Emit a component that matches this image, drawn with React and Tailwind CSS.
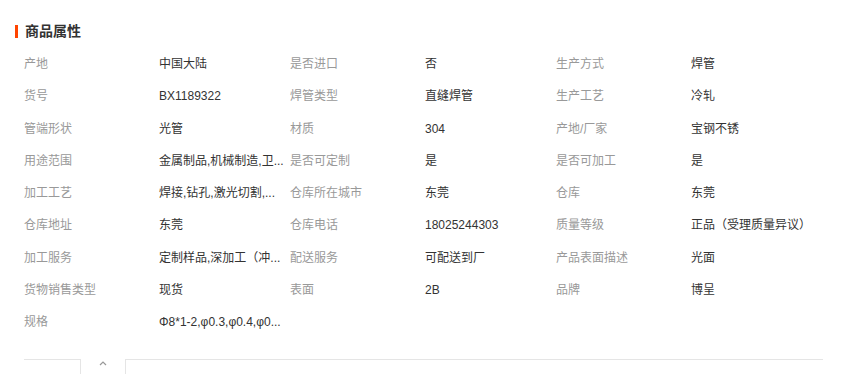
import React from "react"

const rows = [
  ["产地", "中国大陆", "是否进口", "否", "生产方式", "焊管"],
  ["货号", "BX1189322", "焊管类型", "直缝焊管", "生产工艺", "冷轧"],
  ["管端形状", "光管", "材质", "304", "产地/厂家", "宝钢不锈"],
  ["用途范围", "金属制品,机械制造,卫...", "是否可定制", "是", "是否可加工", "是"],
  ["加工工艺", "焊接,钻孔,激光切割,...", "仓库所在城市", "东莞", "仓库", "东莞"],
  ["仓库地址", "东莞", "仓库电话", "18025244303", "质量等级", "正品（受理质量异议）"],
  ["加工服务", "定制样品,深加工（冲...", "配送服务", "可配送到厂", "产品表面描述", "光面"],
  ["货物销售类型", "现货", "表面", "2B", "品牌", "博呈"],
  ["规格", "Φ8*1-2,φ0.3,φ0.4,φ0...", "", "", "", ""],
]

const App = () => {
  return (
    <div
      className="w-[845px] h-[374px] overflow-hidden bg-white"
      style={{ fontFamily: '"Liberation Sans", "Noto Sans CJK SC", sans-serif' }}
    >
      <div className="pt-[24px] pl-[15px] flex items-center h-[38px]">
        <span className="w-[3px] h-[13px] bg-[#ff4400]" />
        <h2 className="ml-[7px] text-[14px] font-bold text-[#333] leading-[14px]">商品属性</h2>
      </div>

      <div className="ml-[24px] mt-[10px] w-[798px] grid grid-cols-[135px_131px_135px_131px_135px_131px] text-[12px]">
        {rows.map((row, i) => (
          <React.Fragment key={i}>
            {row.map((cell, j) => (
              <div
                key={j}
                className={`h-[32.25px] flex items-center whitespace-nowrap ${
                  j % 2 === 0 ? "text-[#999]" : "text-[#333]"
                }`}
              >
                {cell}
              </div>
            ))}
          </React.Fragment>
        ))}
      </div>

      <div className="ml-[24px] mt-[21px] w-[799px] flex items-start">
        <div className="w-[56px] border-t border-[#e5e5e5]" />
        <div className="w-[46px] h-[24px] border-x border-b border-[#e5e5e5] rounded-b-[4px] flex justify-center pt-[1px]">
          <svg width="8" height="6" viewBox="0 0 8 6" fill="none">
            <polyline points="1,5 4,2 7,5" stroke="#999" strokeWidth="1.2" />
          </svg>
        </div>
        <div className="flex-1 border-t border-[#e5e5e5]" />
      </div>
    </div>
  )
}

export default App
